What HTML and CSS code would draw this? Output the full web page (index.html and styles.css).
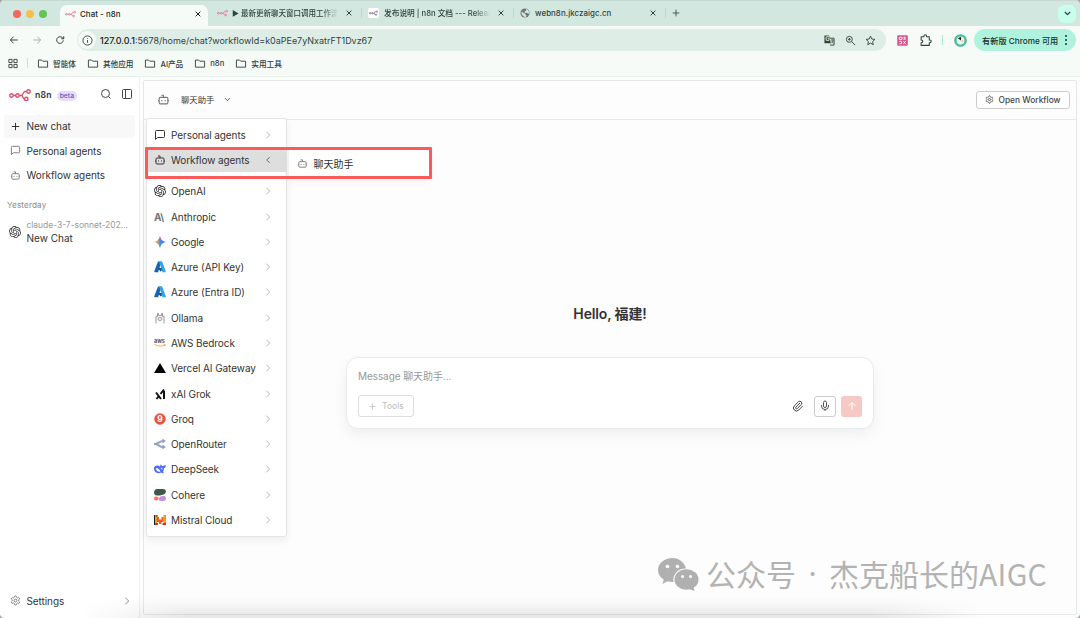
FILE: index.html
```html
<!DOCTYPE html>
<html lang="zh-CN">
<head>
    <meta charset="UTF-8">
    <meta name="viewport" content="width=device-width, initial-scale=1.0">
    <title>Chat - n8n</title>
    <link rel="stylesheet" href="styles.css">
</head>
<body>
    <!-- Icon set -->
    <svg class="sprite" width="0" height="0">
        <symbol id="chevron-long" viewBox="0 0 24 24"><path d="m8 20 8-8-8-8"/></symbol>
        <symbol id="chevron-left" viewBox="0 0 24 24"><path d="m16 19-7-7 7-7"/></symbol>
        <symbol id="chevron-down" viewBox="0 0 24 24"><path d="m5 8 7 7 7-7"/></symbol>
        <symbol id="plus" viewBox="0 0 24 24"><path d="M4 12h16M12 4v16"/></symbol>
        <symbol id="close" viewBox="0 0 24 24"><path d="M5 5l14 14M19 5 5 19"/></symbol>
        <symbol id="bot" viewBox="0 0 24 24"><path d="M12 8V4H8"/><rect width="16" height="12" x="4" y="8" rx="2"/><path d="M2 14h2M20 14h2M15 13v2M9 13v2"/></symbol>
        <symbol id="message" viewBox="0 0 24 24"><path d="M21 15a2 2 0 0 1-2 2H7l-4 4V5a2 2 0 0 1 2-2h14a2 2 0 0 1 2 2z"/></symbol>
        <symbol id="search" viewBox="0 0 24 24"><circle cx="11" cy="11" r="8"/><path d="m21 21-4.3-4.3"/></symbol>
        <symbol id="zoom-in" viewBox="0 0 24 24"><circle cx="9.5" cy="9.5" r="6.5"/><path d="m22 22-7.5-7.5M9.5 6.5v6M6.5 9.5h6"/></symbol>
        <symbol id="panel" viewBox="0 0 24 24"><rect width="18" height="18" x="3" y="3" rx="2"/><path d="M9 3v18"/></symbol>
        <symbol id="gear" viewBox="0 0 24 24"><path d="M12.22 2h-.44a2 2 0 0 0-2 2v.18a2 2 0 0 1-1 1.73l-.43.25a2 2 0 0 1-2 0l-.15-.08a2 2 0 0 0-2.73.73l-.22.38a2 2 0 0 0 .73 2.73l.15.1a2 2 0 0 1 1 1.72v.51a2 2 0 0 1-1 1.74l-.15.09a2 2 0 0 0-.73 2.73l.22.38a2 2 0 0 0 2.73.73l.15-.08a2 2 0 0 1 2 0l.43.25a2 2 0 0 1 1 1.73V20a2 2 0 0 0 2 2h.44a2 2 0 0 0 2-2v-.18a2 2 0 0 1 1-1.73l.43-.25a2 2 0 0 1 2 0l.15.08a2 2 0 0 0 2.73-.73l.22-.39a2 2 0 0 0-.73-2.73l-.15-.08a2 2 0 0 1-1-1.74v-.5a2 2 0 0 1 1-1.74l.15-.09a2 2 0 0 0 .73-2.73l-.22-.38a2 2 0 0 0-2.73-.73l-.15.08a2 2 0 0 1-2 0l-.43-.25a2 2 0 0 1-1-1.73V4a2 2 0 0 0-2-2z"/><circle cx="12" cy="12" r="3"/></symbol>
        <symbol id="folder" viewBox="0 0 24 24"><path d="M2 4.5h7L11.500 7H22v13H2z"/></symbol>
        <symbol id="arrow-left" viewBox="0 0 24 24"><path d="M21 12H4M11 4l-8 8 8 8"/></symbol>
        <symbol id="arrow-right" viewBox="0 0 24 24"><path d="M3 12h17M13 4l8 8-8 8"/></symbol>
        <symbol id="arrow-up" viewBox="0 0 24 24"><path d="m5 12 7-7 7 7M12 19V5"/></symbol>
        <symbol id="n8n" viewBox="0 0 44 24"><circle cx="5" cy="13" r="3.5"/><circle cx="17" cy="13" r="3.5"/><path d="M8.5 13h5M20.5 13H24c6 0 2-8 9-8h2.5M24 13c6 0 2 7 7 7"/><circle cx="39" cy="5" r="3.5"/><circle cx="34.5" cy="20" r="3.5"/></symbol>
        <symbol id="openai" viewBox="0 0 24 24"><path d="M22.2819 9.8211a5.9847 5.9847 0 0 0-.5157-4.9108 6.0462 6.0462 0 0 0-6.5098-2.9A6.0651 6.0651 0 0 0 4.9807 4.1818a5.9847 5.9847 0 0 0-3.9977 2.9 6.0462 6.0462 0 0 0 .7427 7.0966 5.98 5.98 0 0 0 .511 4.9107 6.051 6.051 0 0 0 6.5146 2.9001A5.9847 5.9847 0 0 0 13.2599 24a6.0557 6.0557 0 0 0 5.7718-4.2058 5.9894 5.9894 0 0 0 3.9977-2.9001 6.0557 6.0557 0 0 0-.7475-7.0729zm-9.022 12.6081a4.4755 4.4755 0 0 1-2.8764-1.0408l.1419-.0804 4.7783-2.7582a.7948.7948 0 0 0 .3927-.6813v-6.7369l2.02 1.1686a.071.071 0 0 1 .038.052v5.5826a4.504 4.504 0 0 1-4.4945 4.4944zm-9.6607-4.1254a4.4708 4.4708 0 0 1-.5346-3.0137l.142.0852 4.783 2.7582a.7712.7712 0 0 0 .7806 0l5.8428-3.3685v2.3324a.0804.0804 0 0 1-.0332.0615L9.74 19.9502a4.4992 4.4992 0 0 1-6.1408-1.6464zM2.3408 7.8956a4.485 4.485 0 0 1 2.3655-1.9728V11.6a.7664.7664 0 0 0 .3879.6765l5.8144 3.3543-2.0201 1.1685a.0757.0757 0 0 1-.071 0l-4.8303-2.7865A4.504 4.504 0 0 1 2.3408 7.872zm16.5963 3.8558L13.1038 8.364 15.1192 7.2a.0757.0757 0 0 1 .071 0l4.8303 2.7913a4.4944 4.4944 0 0 1-.6765 8.1042v-5.6772a.79.79 0 0 0-.407-.667zm2.0107-3.0231l-.142-.0852-4.7735-2.7818a.7759.7759 0 0 0-.7854 0L9.409 9.2297V6.8974a.0662.0662 0 0 1 .0284-.0615l4.8303-2.7866a4.4992 4.4992 0 0 1 6.6802 4.66zM8.3065 12.863l-2.02-1.1638a.0804.0804 0 0 1-.038-.0567V6.0742a4.4992 4.4992 0 0 1 7.3757-3.4537l-.142.0805L8.704 5.459a.7948.7948 0 0 0-.3927.6813zm1.0976-2.3654l2.602-1.4998 2.6069 1.4998v2.9994l-2.5974 1.4997-2.6067-1.4997Z"/></symbol>
        <symbol id="azure" viewBox="0 0 24 24"><path fill="#1766b5" d="M8 1h7L8.300 22.500H2q-2-.5-1.500-2z"/><path fill="#0b4f91" d="M8 14h10v3l-5 4z"/><path fill="#35a2ea" d="M9 1h6.500q1 .2 1.400 1.300l6.600 18.200q.3 1.800-1.100 2h-6.700q1.300-.5.9-1.800L10.300 2.700Q10 1.500 9 1z"/></symbol>
    </svg>

    <div class="window">
        <!-- Browser tabs -->
        <div class="tabs">
            <div class="lights"><i class="red"></i><i class="yellow"></i><i class="green"></i></div>
            <div class="tab active">
                <svg class="logo"><use href="#n8n"/></svg>
                <span class="tab-title">Chat - n8n</span>
                <svg class="x"><use href="#close"/></svg>
            </div>
            <div class="tab tab-update">
                <svg class="logo"><use href="#n8n"/></svg>
                <span class="tab-title fade">► 最新更新聊天窗口调用工作流</span>
                <svg class="x"><use href="#close"/></svg>
            </div>
            <div class="tab tab-docs">
                <span class="docs-logo"><svg class="logo"><use href="#n8n"/></svg></span>
                <span class="tab-title fade">发布说明 | n8n 文档 --- Releas</span>
                <svg class="x"><use href="#close"/></svg>
            </div>
            <div class="tab tab-web">
                <svg class="globe" viewBox="0 0 24 24"><circle cx="12" cy="12" r="11" fill="#777"/><path d="M3 10c4-1 5 3 8 3s1 4 3 4 1 3 0 5c-5-1-10-5-11-12zM11 2c2 1 4 0 4 3s-4 2-4 5 7 0 11 4c1-5-3-12-11-12z" fill="#d4e7e0"/></svg>
                <span class="tab-title">webn8n.jkczaigc.cn</span>
                <svg class="x"><use href="#close"/></svg>
            </div>
            <svg class="new-tab"><use href="#plus"/></svg>
            <span class="tab-search"><svg><use href="#chevron-down"/></svg></span>
        </div>

        <!-- Address bar -->
        <div class="toolbar">
            <svg class="nav"><use href="#arrow-left"/></svg>
            <svg class="nav disabled"><use href="#arrow-right"/></svg>
            <svg class="nav" viewBox="0 0 24 24"><path d="M20 13a8 8 0 1 1-2.3-6.5L21 9M21 3v6h-6"/></svg>
            <div class="address">
                <span class="info"><svg viewBox="0 0 24 24"><circle cx="12" cy="12" r="10"/><path d="M12 11v6M12 7v1.5"/></svg></span>
                <span class="url"><b>127.0.0.1</b>:5678/home/chat?workflowId=k0aPEe7yNxatrFT1Dvz67</span>
                <svg class="translate" viewBox="0 0 24 24"><path d="M11 7h11v15H13"/><path d="M1 1h10l4 17H1z" class="solid"/><text x="2.5" y="14" class="g">G</text><path d="M15 11h6M18 9v2M20 11c-1 4-3 6-4 7M17 13c1 3 2 4 4 5" stroke-width="1.5"/></svg>
                <svg><use href="#zoom-in"/></svg>
                <svg viewBox="0 0 24 24"><path d="m12 2.5 2.9 6.3 6.8.8-5 4.7 1.3 6.8-6-3.400-6 3.400 1.300-6.800-5-4.700 6.800-.8z"/></svg>
            </div>
            <svg class="ext" viewBox="0 0 24 24"><rect x="0.5" y="0.5" width="23" height="23" rx="2" fill="#dc5288" stroke="none"/><path d="M5 5h6v5H5zM14 5h5M14 9h5M17 5v4M5 14h5v5H5M14 13l5 7M19 13l-5 7" stroke="#fff"/></svg>
            <svg class="puzzle" viewBox="0 0 24 24"><path d="M4 5h5V4a2.5 2.5 0 0 1 5 0v1h5v6h1a2.5 2.5 0 0 1 0 5h-1v5H4v-5c4 0 4-5 0-5z"/></svg>
            <i class="split"></i>
            <svg class="avatar" viewBox="0 0 24 24"><circle cx="12" cy="12" r="9.5" fill="#eef8ee" stroke="#4dbb9b" stroke-width="4.5"/><path d="M13 5v7L7 8z" fill="#222" stroke="none"/><path d="M12 12c4-3 7 0 4 4z" fill="#f2cfac" stroke="none"/></svg>
            <div class="update">有新版 Chrome 可用 <span class="dots"><i></i><i></i><i></i></span></div>
        </div>

        <div class="bookmarks">
            <svg class="apps" viewBox="0 0 24 24"><path d="M3 3h7v7H3zM14 3h7v7h-7zM3 14h7v7H3zM14 14h7v7h-7z"/></svg>
            <i class="split"></i>
            <span><svg><use href="#folder"/></svg>智能体</span>
            <span><svg><use href="#folder"/></svg>其他应用</span>
            <span><svg><use href="#folder"/></svg>AI产品</span>
            <span><svg><use href="#folder"/></svg>n8n</span>
            <span><svg><use href="#folder"/></svg>实用工具</span>
        </div>

        <div class="app">
            <!-- Sidebar -->
            <aside class="sidebar">
                <div class="brand">
                    <svg class="brand-logo"><use href="#n8n"/></svg>
                    <b>n8n</b>
                    <span class="beta">beta</span>
                    <svg class="tool"><use href="#search"/></svg>
                    <svg class="tool"><use href="#panel"/></svg>
                </div>
                <a class="side-link new"><svg><use href="#plus"/></svg>New chat</a>
                <a class="side-link"><svg><use href="#message"/></svg>Personal agents</a>
                <a class="side-link"><svg><use href="#bot"/></svg>Workflow agents</a>
                <div class="group">Yesterday</div>
                <div class="session">
                    <svg class="solid"><use href="#openai"/></svg>
                    <div><small>claude-3-7-sonnet-202...</small><p>New Chat</p></div>
                </div>
                <a class="side-link settings"><svg><use href="#gear"/></svg>Settings<svg class="end"><use href="#chevron-long"/></svg></a>
            </aside>

            <!-- Chat panel -->
            <main class="panel">
                <div class="panel-head">
                    <svg class="head-bot"><use href="#bot"/></svg>
                    <span>聊天助手</span>
                    <svg class="head-arrow"><use href="#chevron-down"/></svg>
                    <button class="open"><svg><use href="#gear"/></svg>Open Workflow</button>
                </div>
                <div class="chat">
                    <h1>Hello, 福建!</h1>
                    <div class="composer">
                        <div class="placeholder">Message 聊天助手...</div>
                        <div class="actions">
                            <button class="tools"><svg><use href="#plus"/></svg>Tools</button>
                            <svg class="clip" viewBox="0 0 24 24"><path d="m16 6-8.400 8.600a2 2 0 0 0 2.800 2.800l8.400-8.600a4 4 0 0 0-5.600-5.600l-8.400 8.500a6 6 0 0 0 8.500 8.500l8.400-8.600"/></svg>
                            <button class="mic"><svg viewBox="0 0 24 24"><rect x="9" y="2" width="6" height="13" rx="3"/><path d="M19 10v2a7 7 0 0 1-14 0v-2M12 19v3"/></svg></button>
                            <button class="send"><svg><use href="#arrow-up"/></svg></button>
                        </div>
                    </div>
                </div>
            </main>
        </div>

        <!-- Agent dropdown -->
        <div class="menu">
            <div class="item dark"><svg><use href="#message"/></svg>Personal agents<svg class="arrow"><use href="#chevron-long"/></svg></div>
            <div class="item dark selected"><svg><use href="#bot"/></svg>Workflow agents<svg class="arrow"><use href="#chevron-left"/></svg></div>
            <div class="divider"></div>
            <div class="item"><svg class="solid"><use href="#openai"/></svg>OpenAI<svg class="arrow"><use href="#chevron-long"/></svg></div>
            <div class="item"><svg class="mark" viewBox="0 0 24 24"><text x="0" y="19" class="anthropic">A\</text></svg>Anthropic<svg class="arrow"><use href="#chevron-long"/></svg></div>
            <div class="item"><svg class="mark" viewBox="0 0 24 24"><defs><linearGradient id="gem"><stop offset="0" stop-color="#f3bc35"/><stop offset=".35" stop-color="#b4a276"/><stop offset=".55" stop-color="#4e87ee"/><stop offset="1" stop-color="#377bea"/></linearGradient></defs><path d="M12 0c1 6 5 11 12 12-7 1-11 6-12 12-1-6-5-11-12-12 7-1 11-6 12-12z" fill="url(#gem)"/><path d="M12 0c.5 4 1 5 2 6l-3 4-3-2c3-2 3-4 4-8z" fill="#df6464"/><path d="M12 24c-1-5-2-7-4-9l3-2 2 5z" fill="#4cae70"/></svg>Google<svg class="arrow"><use href="#chevron-long"/></svg></div>
            <div class="item"><svg class="mark"><use href="#azure"/></svg>Azure (API Key)<svg class="arrow"><use href="#chevron-long"/></svg></div>
            <div class="item"><svg class="mark"><use href="#azure"/></svg>Azure (Entra ID)<svg class="arrow"><use href="#chevron-long"/></svg></div>
            <div class="item"><svg class="llama" viewBox="0 0 24 24"><path d="M4 23V9h3V3h2v4h6V3h2v6h3v14"/><ellipse cx="12" cy="14" rx="4" ry="3"/><path d="M7.500 11v.5M16.500 11v.5M11.500 14h1"/></svg>Ollama<svg class="arrow"><use href="#chevron-long"/></svg></div>
            <div class="item"><svg class="mark" viewBox="0 0 24 24"><text x="0" y="12" class="aws">aws</text><path d="M1 15c7 4 15 4 21 1M19 14.500l3.500.5-1 3" fill="none" stroke="#f3a23a" stroke-width="1.8"/></svg>AWS Bedrock<svg class="arrow"><use href="#chevron-long"/></svg></div>
            <div class="item"><svg class="mark" viewBox="0 0 24 24"><path d="m12 2 12 20H0z" fill="#000"/></svg>Vercel AI Gateway<svg class="arrow"><use href="#chevron-long"/></svg></div>
            <div class="item"><svg class="mark" viewBox="0 0 24 24"><path d="M4 9l10 13M5 22l4-5M13 12l7-9M20 6v16" fill="none" stroke="#111" stroke-width="4"/></svg>xAI Grok<svg class="arrow"><use href="#chevron-long"/></svg></div>
            <div class="item"><svg class="mark" viewBox="0 0 24 24"><circle cx="12" cy="12" r="11.5" fill="#e9553c"/><text x="12" y="18" class="groq">9</text></svg>Groq<svg class="arrow"><use href="#chevron-long"/></svg></div>
            <div class="item"><svg class="mark" viewBox="0 0 24 24"><path d="M0 12h3c5 0 8-6 15-6M3 12c5 0 8 6 15 6" fill="none" stroke="#96a4b9" stroke-width="4"/><path d="m17 1 7 5-7 5zM17 13l7 5-7 5z" fill="#96a4b9"/></svg>OpenRouter<svg class="arrow"><use href="#chevron-long"/></svg></div>
            <div class="item"><svg class="mark" viewBox="0 0 24 24"><path d="M0 11c0-6 7-8 12-4 1-1 0-4 2-4 2 3 3 4 5 3s2-2 5-1c-1 4-2 5-4 5 0 5-2 7-2 8l2 2c-3 1-4 0-6-1C7 23 0 18 0 11z" fill="#4d6bfe"/><path d="M4 10c5 0 7 4 9 7-4 2-9-1-9-7zM13 10c3-1 4 1 4 4z" fill="#fff"/></svg>DeepSeek<svg class="arrow"><use href="#chevron-long"/></svg></div>
            <div class="item"><svg class="mark" viewBox="0 0 24 24"><path d="M7 0h11c8 0 7 9 1 11-5 2-9 2-13 2-8 0-8-13 1-13z" fill="#39594d"/><rect x="0" y="15" width="9" height="8" rx="4" fill="#ff7759"/><path d="M13 15c4-2 11-2 11 3 0 6-5 6-10 6-6 0-5-7-1-9z" fill="#c58de0"/></svg>Cohere<svg class="arrow"><use href="#chevron-long"/></svg></div>
            <div class="item"><svg class="mark" viewBox="0 0 24 24"><path d="M1 2h5v20H1zM19 2h5v20h-5z" fill="#f09a25"/><path d="M6 6h4v5h5V6h4v10h-4v4h-5v-4H6z" fill="#ee5c24"/><path d="M0 2h2v20H0zM5 2h2v4H5z" fill="#29211b"/><path d="M2 18h6v4H2zM17 18h7v4h-7z" fill="#dd3320"/></svg>Mistral Cloud<svg class="arrow"><use href="#chevron-long"/></svg></div>
        </div>
        <div class="submenu"><svg><use href="#bot"/></svg>聊天助手</div>
        <div class="highlight"></div>

        <div class="watermark">
            <svg viewBox="0 0 41 34"><path d="M14.5 0C6.500 0 0 5.300 0 12c0 4 2.200 7.300 5.700 9.500L4.500 26l5-2.700c2 .6 4 .8 6 .7A11.500 11.500 0 0 1 28 10.500C26.500 4.500 21 0 14.500 0z"/><ellipse cx="28.500" cy="21.500" rx="12" ry="10.300"/><path d="m31 31 5.500 2-1-4z"/><g fill="#fdfdfd"><circle cx="9.500" cy="8.500" r="1.800"/><circle cx="19.500" cy="8.500" r="1.800"/><circle cx="24.500" cy="18.500" r="1.500"/><circle cx="32.500" cy="18.500" r="1.500"/></g></svg>
            <span>公众号</span><span class="dot">·</span><span>杰克船长的<span class="latin">AIGC</span></span>
        </div>
        <div class="shade"></div>
    </div>
</body>
</html>
```

FILE: styles.css
```css
* {
    box-sizing: border-box;
}
body {
    margin: 0;
    background: #a5a8a7;
    font-family: Inter, "Noto Sans CJK SC", sans-serif;
    font-size: 10px;
    color: #333;
}
svg {
    width: 12px;
    height: 12px;
    flex: none;
    fill: none;
    stroke: currentColor;
    stroke-width: 2;
    stroke-linejoin: round;
}
button {
    font: inherit;
    padding: 0;
    background: #fff;
}
.sprite {
    position: absolute;
    width: 0;
    height: 0;
}
.solid {
    fill: currentColor;
    stroke: none;
}
.window {
    position: relative;
    display: flex;
    flex-direction: column;
    width: 1080px;
    height: 618px;
    overflow: hidden;
    background: #f6fbf8;
    border-radius: 5px;
}

/* Browser tabs */
.tabs {
    display: flex;
    align-items: center;
    height: 26px;
    padding-right: 4px;
    background: #d1e7df;
    border-top: 1px solid #c5d8d1;
    font-size: 7.9px;
    color: #34433e;
}
.lights {
    display: flex;
    gap: 5px;
    width: 60px;
    padding-left: 13px;
}
.lights i {
    width: 8px;
    height: 8px;
    border-radius: 50%;
}
.red { background: #ed6a5e; }
.yellow { background: #f5bf4f; }
.green { background: #61c554; }
.tab {
    display: flex;
    align-items: center;
    height: 21px;
    padding-bottom: 2px;
}
.tab.active {
    align-self: flex-end;
    width: 148px;
    padding: 0 6px 4px 5px;
    background: #f6fbf8;
    border-radius: 7px 7px 0 0;
    color: #1d2723;
}
.logo {
    width: 11px;
    height: 8px;
    margin-right: 4px;
    stroke: #e0708e;
    stroke-width: 3;
}
.tab-title {
    flex: 1;
    min-width: 0;
    white-space: nowrap;
    font-weight: 500;
    letter-spacing: .05px;
}
.fade {
    letter-spacing: 0;
    -webkit-mask-image: linear-gradient(90deg, #000 85%, transparent);
    mask-image: linear-gradient(90deg, #000 85%, transparent);
}
.x {
    width: 8px;
    height: 8px;
    margin-left: 7px;
    stroke-width: 3;
}
.tab-update {
    width: 153px;
    padding-right: 8px;
    padding-left: 9px;
}
.tab-update .tab-title {
    font-size: 7.5px;
}
.tab-docs .tab-title {
    font-size: 7.7px;
}
.tab-docs,
.tab-web {
    width: 152px;
    padding-right: 8px;
    padding-left: 7px;
    background: linear-gradient(#a9e3ce, #a9e3ce) left 5px / 1px 10px no-repeat;
}
.docs-logo {
    display: flex;
    align-items: center;
    width: 11px;
    height: 10px;
    margin-right: 5px;
    background: #fff;
    border-radius: 2px;
}
.docs-logo .logo {
    width: 9px;
    margin: 0 1px;
    stroke: #5d5777;
}
.globe {
    width: 10px;
    height: 10px;
    margin-right: 5px;
    stroke: none;
}
.new-tab {
    width: 22px;
    height: 10px;
    margin-bottom: 1px;
    background: linear-gradient(#a9e3ce, #a9e3ce) left center / 1px 10px no-repeat;
}
.tab-search {
    display: flex;
    align-items: center;
    justify-content: center;
    width: 18px;
    height: 18px;
    margin-left: auto;
    background: #c8ffec;
    border-radius: 6px;
}
.tab-search svg {
    width: 9px;
    height: 9px;
    stroke-width: 3.5;
}

/* Address bar */
.toolbar {
    display: flex;
    align-items: center;
    height: 28px;
    padding: 0 4px 0 9px;
    color: #33433d;
}
.nav {
    width: 10px;
    height: 10px;
    margin-right: 13px;
    stroke-width: 2.4;
}
.disabled {
    color: #a6aeab;
}
.address {
    display: flex;
    align-items: center;
    gap: 9.5px;
    width: 809px;
    height: 22px;
    margin-left: -1px;
    padding: 0 10px 0 1px;
    background: #deede6;
    border-radius: 11px;
    font-size: 8.97px;
}
.info {
    display: flex;
    align-items: center;
    justify-content: center;
    width: 18px;
    height: 18px;
    background: #f6fbf8;
    border-radius: 50%;
}
.info svg {
    width: 10px;
    height: 10px;
}
.url {
    flex: 1;
    margin-left: -5.5px;
}
.url b {
    font-weight: 500;
    color: #17211d;
}
.address svg {
    width: 11px;
    height: 11px;
}
.g {
    font: bold 13px Inter, sans-serif;
    fill: #deede6;
    stroke: none;
}
.ext {
    width: 11px;
    height: 11px;
    margin-left: 11px;
}
.puzzle {
    width: 13px;
    height: 13px;
    margin-left: 11px;
}
.split {
    width: 1px;
    height: 10px;
    background: #b0eed9;
}
.toolbar .split {
    margin: 0 11px 0 10px;
}
.avatar {
    width: 13px;
    height: 13px;
}
.update {
    display: flex;
    align-items: center;
    justify-content: space-between;
    width: 102px;
    height: 22px;
    margin-left: auto;
    padding: 0 9px 0 8px;
    background: #aff2dd;
    border-radius: 11px;
    font-size: 8.2px;
    font-weight: 500;
    color: #17342a;
}
.dots {
    display: grid;
    gap: 2px;
}
.dots i {
    width: 2px;
    height: 2px;
    background: #17342a;
    border-radius: 50%;
}
.bookmarks {
    display: flex;
    align-items: center;
    height: 23px;
    padding: 0 0 4px 7px;
    border-bottom: 1px solid #e5efeb;
    font-size: 7.65px;
    color: #33403b;
}
.bookmarks .split {
    margin: 0 9px 0 8px;
}
.bookmarks span {
    display: flex;
    align-items: center;
    gap: 4px;
    margin-right: 11px;
    font-weight: 500;
}
.bookmarks svg {
    width: 12px;
    height: 11px;
}

/* Sidebar */
.app {
    display: flex;
    flex: 1;
    min-height: 0;
    background: #fdfdfd;
}
.sidebar {
    display: flex;
    flex-direction: column;
    width: 140px;
    padding: 0 4px 5px;
    background: #fff;
    border-right: 1px solid #eee;
}
.brand {
    display: flex;
    align-items: center;
    height: 37px;
    padding: 0 2px 1px 5px;
}
.brand-logo {
    width: 22px;
    height: 12px;
    margin-right: 4px;
    color: #db4c69;
    stroke-width: 2.6;
}
.brand b {
    font-size: 8.6px;
    font-weight: 600;
    letter-spacing: .2px;
}
.beta {
    margin: 1px auto 0 5px;
    padding: 0 3px;
    background: #e2def6;
    border-radius: 5px;
    font-size: 6.8px;
    font-weight: 500;
    line-height: 10px;
    color: #6552c5;
}
.tool {
    margin: -3px 0 0 9px;
    color: #444;
}
.side-link {
    display: flex;
    align-items: center;
    gap: 5.5px;
    height: 24.5px;
    padding: 0 0 1px 6px;
    letter-spacing: -.07px;
}
.side-link svg {
    width: 11px;
    height: 11px;
    color: #777;
}
.side-link.new {
    height: 23px;
    margin: 1px 0;
    background: #f8f8f8;
    border-radius: 3px;
}
.side-link.new svg {
    color: #222;
}
.group {
    margin: 11px 3px 8px;
    font-size: 8.2px;
    line-height: 12px;
    letter-spacing: .1px;
    color: #8b8b8b;
}
.session {
    display: flex;
    align-items: center;
    gap: 5.5px;
    padding-left: 5px;
}
.session small {
    display: block;
    font-size: 8.45px;
    line-height: 13px;
    color: #999;
}
.session p {
    margin: 0;
    line-height: 13px;
}
.settings {
    margin-top: auto;
    padding-bottom: 0;
}
.settings .end {
    width: 10px;
    height: 10px;
    margin: 0 3px 0 auto;
}

/* Chat panel */
.panel {
    display: flex;
    flex-direction: column;
    flex: 1;
    margin: 3px;
    border: 1px solid #e7e7e7;
    border-radius: 2px;
}
.panel-head {
    display: flex;
    align-items: center;
    height: 39px;
    padding: 0 6px 1px 13px;
    border-bottom: 1px solid #e9e9e9;
    font-size: 8.4px;
}
.panel-head span {
    margin-top: -1px;
}
.head-bot {
    width: 13px;
    height: 13px;
    margin-right: 11px;
    color: #777;
}
.head-arrow {
    width: 9px;
    height: 9px;
    margin-left: 8px;
}
.open {
    display: flex;
    align-items: center;
    justify-content: center;
    gap: 4px;
    width: 94px;
    height: 18px;
    margin-left: auto;
    border: 1px solid #ccc;
    border-radius: 3px;
    font-size: 8.4px;
    font-weight: 500;
    color: #444;
}
.open svg {
    width: 9px;
    height: 9px;
}
.chat {
    display: flex;
    flex: 1;
    flex-direction: column;
    align-items: center;
    padding-top: 184px;
}
h1 {
    margin: 0 0 33px;
    font-size: 14px;
    font-weight: 600;
    line-height: 20px;
    letter-spacing: -.15px;
}
.composer {
    width: 528px;
    height: 72px;
    padding: 11px 11px 0;
    background: #fff;
    border: 1px solid #eaeaea;
    border-radius: 12px;
    box-shadow: 0 6px 14px rgba(0, 0, 0, .06);
}
.placeholder {
    line-height: 14px;
    letter-spacing: -.08px;
    color: #999;
}
.actions {
    display: flex;
    align-items: center;
    margin-top: 12px;
}
.tools {
    display: flex;
    align-items: center;
    justify-content: center;
    gap: 5px;
    width: 56px;
    height: 22px;
    border: 1px solid #ddd;
    border-radius: 3px;
    font-size: 8.6px;
    color: #bbb;
}
.tools svg {
    width: 9px;
    height: 9px;
}
.clip {
    margin: 0 10px 0 auto;
    color: #444;
}
.mic,
.send {
    display: flex;
    align-items: center;
    justify-content: center;
    width: 22px;
    height: 21px;
    border: 1px solid #ccc;
    border-radius: 3px;
}
.mic svg,
.send svg {
    width: 12px;
    height: 12px;
}
.mic svg {
    color: #555;
}
.send {
    width: 21px;
    margin-left: 5px;
    background: #f7c9c5;
    border: 0;
    color: #fff;
}

/* Agent dropdown */
.menu {
    position: absolute;
    top: 118px;
    left: 146px;
    width: 141px;
    height: 419px;
    padding-top: 3px;
    background: #fff;
    border: 1px solid #e5e5e5;
    border-radius: 3px;
    box-shadow: 0 3px 9px rgba(0, 0, 0, .07);
}
.item {
    display: flex;
    align-items: center;
    gap: 5px;
    height: 25.27px;
    padding: 0 13px 0 7px;
    letter-spacing: -.08px;
    white-space: nowrap;
}
.item svg {
    color: #777;
}
.item .solid {
    color: #222;
}
.item .mark {
    stroke: none;
}
.item .llama {
    stroke-width: 1.5;
}
.item.dark svg {
    width: 12px;
    height: 12px;
    color: #333;
}
.item .arrow,
.item.dark .arrow {
    width: 10px;
    height: 10px;
    margin: 0 0 0 auto;
    color: #aaa;
}
.item.selected {
    background: #dedede;
    height: 25px;
}
.item.selected .arrow {
    color: #555;
}
.divider {
    height: 6.5px;
}
.anthropic {
    font: bold 20px Inter, sans-serif;
    letter-spacing: -1px;
    fill: #72727c;
}
.aws {
    font: bold 11px Inter, sans-serif;
    fill: #51565d;
}
.groq {
    font: bold 17px Inter, sans-serif;
    text-anchor: middle;
    fill: #fff;
}
.submenu {
    position: absolute;
    top: 149px;
    left: 289px;
    display: flex;
    align-items: center;
    gap: 5.5px;
    width: 142px;
    height: 28px;
    padding-left: 8px;
    background: #fff;
    box-shadow: 0 3px 9px rgba(0, 0, 0, .07);
}
.submenu svg {
    width: 11px;
    height: 11px;
    color: #777;
}
.highlight {
    position: absolute;
    top: 147px;
    left: 145px;
    width: 287px;
    height: 32px;
    border: 3px solid #fa5a5a;
    border-radius: 1px;
}

/* Account watermark */
.watermark {
    position: absolute;
    top: 556px;
    left: 658px;
    display: flex;
    font-family: "Noto Sans CJK SC", sans-serif;
    font-size: 30px;
    font-weight: 400;
    line-height: 34px;
    color: #b3b3b3;
    white-space: nowrap;
}
.watermark svg {
    width: 41px;
    height: 34px;
    margin: 2px 7px 0 0;
    fill: #b0b0b0;
    stroke: none;
}
.dot {
    width: 33px;
    font-family: Inter, sans-serif;
    text-align: center;
}
.latin {
    letter-spacing: .3px;
}
.shade {
    position: absolute;
    bottom: 0;
    left: 80px;
    width: 900px;
    height: 20px;
    background: linear-gradient(transparent, rgba(0, 0, 0, .09));
    -webkit-mask-image: linear-gradient(90deg, transparent, #000 12%, #000 88%, transparent);
    mask-image: linear-gradient(90deg, transparent, #000 12%, #000 88%, transparent);
}
```
